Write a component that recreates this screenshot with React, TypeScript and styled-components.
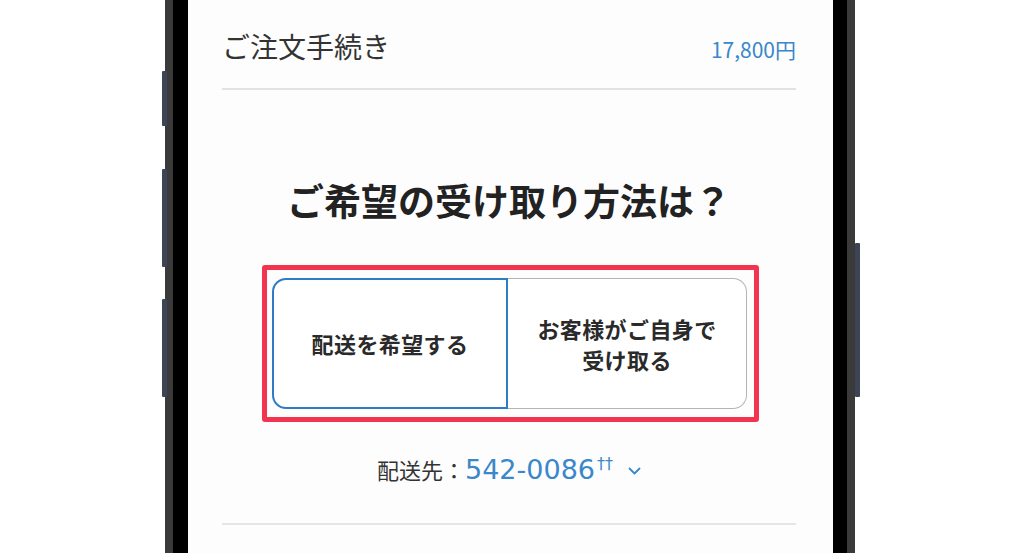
import React from 'react';
import styled, { createGlobalStyle } from 'styled-components';

const GlobalStyle = createGlobalStyle`
  html, body {
    margin: 0;
    padding: 0;
    background: #ffffff;
    overflow: hidden;
  }
  body {
    font-family: "Noto Sans CJK JP", "Noto Sans", sans-serif;
  }
`;

const Page = styled.div`
  width: 1024px;
  height: 553px;
  display: flex;
  padding-left: 165px;
  box-sizing: border-box;
`;

const Phone = styled.div`
  position: relative;
  display: flex;
  height: 553px;
  border-left: 8px solid #3a3a3a;
  border-right: 8px solid #3a3a3a;
  background: #000;
  padding: 0 14px 0 15px;
`;

const SideButton = styled.div<{ $side: 'left' | 'right'; $top: number; $height: number }>`
  position: absolute;
  ${p => (p.$side === 'left' ? 'left: -11px;' : 'right: -13px;')}
  top: ${p => p.$top}px;
  height: ${p => p.$height}px;
  width: 5px;
  background: #3c4456;
  border-radius: 1px;
`;

const Screen = styled.div`
  width: 645px;
  background: #fdfdfd;
  padding: 0 37px 0 34px;
  box-sizing: border-box;
  display: flex;
  flex-direction: column;
`;

const Header = styled.div`
  display: flex;
  justify-content: space-between;
  align-items: baseline;
  padding: 28px 0 24px;
  border-bottom: 2px solid #e2e2e4;
`;

const Title = styled.h1`
  margin: 0;
  font-size: 28px;
  line-height: 36px;
  font-weight: 400;
  color: #333;
`;

const Price = styled.span`
  font-size: 21px;
  color: #3a87c9;
`;

const Question = styled.h2`
  margin: 88px 0 0;
  text-align: center;
  font-size: 37px;
  line-height: 44px;
  font-weight: 700;
  color: #222;
`;

const Highlight = styled.div`
  margin: 43px 0 0 40px;
  width: 497px;
  box-sizing: border-box;
  border: 5px solid #f2344f;
  border-radius: 3px;
  padding: 8px 7px 8px 5px;
  display: flex;
`;

const Choice = styled.button<{ $selected?: boolean }>`
  flex: 0 0 ${p => (p.$selected ? 236 : 239)}px;
  height: 131px;
  margin: 0;
  background: #fff;
  display: flex;
  align-items: center;
  justify-content: center;
  text-align: center;
  font-family: inherit;
  font-size: 22px;
  line-height: 31px;
  letter-spacing: 0.4px;
  font-weight: 700;
  color: #2a2a2a;
  box-sizing: border-box;
  border: ${p => (p.$selected ? '2.5px solid #2e7cc6' : '1.5px solid #b4b4b4')};
  ${p => (p.$selected ? '' : 'border-left: none;')}
  border-radius: ${p => (p.$selected ? '14px 0 0 14px' : '0 14px 14px 0')};
  padding: 0;
`;

const Destination = styled.div`
  margin-top: 31px;
  display: flex;
  justify-content: center;
  align-items: center;
  height: 32px;
`;

const DestLabel = styled.span`
  font-size: 22px;
  color: #333;
`;

const PostCode = styled.span`
  font-family: "DejaVu Sans", sans-serif;
  font-size: 27px;
  color: #3a87c9;
`;

const Plus = styled.span`
  font-family: "DejaVu Sans", sans-serif;
  font-size: 16px;
  color: #3a87c9;
  margin-left: 2px;
  align-self: flex-start;
  margin-top: 1px;
`;

const Chevron = styled.svg`
  margin-left: 15px;
  margin-top: 4px;
`;

const Divider = styled.div`
  margin-top: 38px;
  border-top: 2px solid #e6e6e8;
`;

export default function App() {
  return (
    <>
      <GlobalStyle />
      <Page>
        <Phone>
          <SideButton $side="left" $top={71} $height={55} />
          <SideButton $side="left" $top={169} $height={98} />
          <SideButton $side="left" $top={299} $height={98} />
          <SideButton $side="right" $top={243} $height={154} />
          <Screen>
            <Header>
              <Title>ご注文手続き</Title>
              <Price>17,800円</Price>
            </Header>
            <Question>ご希望の受け取り方法は？</Question>
            <Highlight>
              <Choice $selected>配送を希望する</Choice>
              <Choice>
                お客様がご自身で
                <br />
                受け取る
              </Choice>
            </Highlight>
            <Destination>
              <DestLabel>配送先：</DestLabel>
              <PostCode>542-0086</PostCode>
              <Plus>††</Plus>
              <Chevron width="13" height="8" viewBox="0 0 13 8">
                <polyline points="1.5,1.5 6.5,6.5 11.5,1.5" fill="none" stroke="#3a87c9" strokeWidth="1.8" strokeLinecap="round" strokeLinejoin="round" />
              </Chevron>
            </Destination>
            <Divider />
          </Screen>
        </Phone>
      </Page>
    </>
  );
}
